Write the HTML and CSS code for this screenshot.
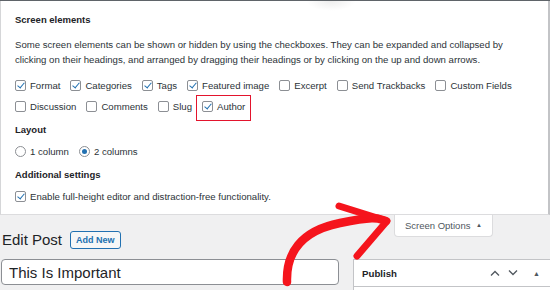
FILE: index.html
```html
<!DOCTYPE html>
<html lang="en">
<head>
    <meta charset="UTF-8">
    <title>Edit Post</title>
    <link rel="stylesheet" href="styles.css">
</head>
<body>
    <div class="topbar"></div>

    <!-- Screen options panel -->
    <div class="screen-meta">
        <h5>Screen elements</h5>
        <p class="desc">Some screen elements can be shown or hidden by using the checkboxes. They can be expanded and collapsed by clicking on their headings, and arranged by dragging their headings or by clicking on the up and down arrows.</p>

        <div class="opts">
            <label><input type="checkbox" checked> Format</label>
            <label><input type="checkbox" checked> Categories</label>
            <label><input type="checkbox" checked> Tags</label>
            <label><input type="checkbox" checked> Featured image</label>
            <label><input type="checkbox"> Excerpt</label>
            <label><input type="checkbox"> Send Trackbacks</label>
            <label><input type="checkbox"> Custom Fields</label>
        </div>
        <div class="opts">
            <label><input type="checkbox"> Discussion</label>
            <label><input type="checkbox"> Comments</label>
            <label><input type="checkbox"> Slug</label>
            <label class="highlight"><input type="checkbox" checked> Author</label>
        </div>

        <h5 class="sub">Layout</h5>
        <div class="opts">
            <label><input type="radio" name="cols"> 1 column</label>
            <label><input type="radio" name="cols" checked> 2 columns</label>
        </div>

        <h5 class="sub">Additional settings</h5>
        <div class="opts">
            <label><input type="checkbox" checked> Enable full-height editor and distraction-free functionality.</label>
        </div>
    </div>

    <div class="head">
        <div class="title-row">
            <h1>Edit Post</h1>
            <a class="add-new" href="#">Add New</a>
        </div>
        <button class="screen-tab">Screen Options <span class="tri">▲</span></button>
    </div>

    <div class="columns">
        <input class="post-title" type="text" value="This Is Important">
        <div class="postbox">
            <div class="postbox-header">
                <h2>Publish</h2>
                <div class="handles">
                    <svg width="10" height="6" viewBox="0 0 10 6"><path d="M1 5.5 L5 1.5 L9 5.5" fill="none" stroke="#50575e" stroke-width="1.3"/></svg>
                    <svg class="down" width="10" height="6" viewBox="0 0 10 6"><path d="M1 0.5 L5 4.5 L9 0.5" fill="none" stroke="#50575e" stroke-width="1.3"/></svg>
                    <span class="tri">▲</span>
                </div>
            </div>
        </div>
    </div>

    <!-- Hand drawn arrow pointing at the tab -->
    <svg class="arrow" width="550" height="290" viewBox="0 0 550 290">
        <path d="M287 282 C286 254, 300 231, 340 223 S378 219, 386 221" fill="none" stroke="#f5141c" stroke-width="8.5" stroke-linecap="round"/>
        <path d="M339 206 L387 221 L357 256" fill="none" stroke="#f5141c" stroke-width="7" stroke-linecap="round" stroke-linejoin="round"/>
    </svg>
</body>
</html>
```

FILE: styles.css
```css
/* Base */
body {
    margin: 0;
    background: #f0f0f1;
    font-family: "Liberation Sans", Arial, sans-serif;
    font-size: 9.6px;
    color: #2c3338;
    width: 550px;
    height: 290px;
    overflow: hidden;
    position: relative;
}

.topbar {
    height: 1px;
    background: #5f6469;
}

/* Screen options panel */
.screen-meta {
    position: relative;
    background: #fff;
    border-left: 1px solid #d5d6d8;
    border-right: 2px solid #c3c4c7;
    border-bottom: 1px solid #dcdcde;
    padding: 11px 14px 6px;
    height: 196px;
}

.screen-meta::before {
    content: "";
    position: absolute;
    left: 305px;
    top: 0;
    width: 50px;
    height: 10px;
    background: radial-gradient(ellipse at center top, rgba(0,0,0,.07), rgba(0,0,0,0) 70%);
}

h5 {
    margin: 0;
    font-size: 9.5px;
    line-height: 15px;
    font-weight: bold;
    color: #1d2327;
}

h5.sub {
    margin-top: 5px;
}

.desc {
    margin: 10px 0 8px;
    line-height: 15px;
    color: #2c3338;
    width: 500px;
}

.opts {
    display: flex;
    gap: 10px;
    height: 21px;
    align-items: center;
}

.opts + h5 {
    margin-top: 5px;
}

h5 + .opts {
    margin-top: 4px;
}

.opts label {
    display: flex;
    align-items: center;
    gap: 4px;
    position: relative;
    height: 21px;
}

/* Red highlight around Author */
.highlight::after {
    content: "";
    position: absolute;
    left: -6px;
    right: -6px;
    top: -1px;
    bottom: -4px;
    border: 1.5px solid #e3142d;
}

input[type="checkbox"],
input[type="radio"] {
    appearance: none;
    -webkit-appearance: none;
    margin: 0;
    width: 11px;
    height: 11px;
    border: 1px solid #8c8f94;
    border-radius: 2px;
    background: #fff;
    position: relative;
    box-sizing: border-box;
}

input[type="radio"] {
    border-radius: 50%;
}

input[type="checkbox"]:checked::before {
    content: "";
    position: absolute;
    left: 3px;
    top: 0;
    width: 3px;
    height: 6px;
    border-right: 1.6px solid #2271b1;
    border-bottom: 1.6px solid #2271b1;
    transform: rotate(40deg);
}

input[type="radio"]:checked::before {
    content: "";
    position: absolute;
    left: 2px;
    top: 2px;
    width: 5px;
    height: 5px;
    border-radius: 50%;
    background: #2271b1;
}

/* Heading row with the tab */
.head {
    display: flex;
    justify-content: space-between;
    align-items: flex-start;
    padding: 0 57px 0 2px;
}

.title-row {
    display: flex;
    align-items: center;
    gap: 8px;
    margin-top: 15px;
}

h1 {
    margin: 0;
    font-size: 15px;
    font-weight: normal;
    line-height: 19px;
    color: #1d2327;
}

.add-new {
    display: inline-block;
    border: 1px solid #2271b1;
    border-radius: 3px;
    background: #f6f7f7;
    color: #2271b1;
    font-weight: bold;
    font-size: 9px;
    text-decoration: none;
    padding: 0 5px;
    line-height: 16px;
}

.screen-tab {
    width: 99px;
    height: 22px;
    background: #fff;
    border: 1px solid #dcdcde;
    border-top: none;
    border-radius: 0 0 4px 4px;
    font-family: inherit;
    font-size: 9.5px;
    color: #50575e;
    padding: 0;
}

.tri {
    font-size: 6px;
    vertical-align: 2px;
    margin-left: 3px;
}

/* Main columns */
.columns {
    display: flex;
    margin-top: 10px;
    padding-left: 1px;
    gap: 14px;
}

.post-title {
    flex-shrink: 0;
    width: 338px;
    height: 26px;
    box-sizing: border-box;
    border: 1px solid #8c8f94;
    border-radius: 4px;
    padding: 0 7px;
    font-family: inherit;
    font-size: 15px;
    color: #1d2327;
    background: #fff;
}

.postbox {
    flex-shrink: 0;
    width: 197px;
    height: 31px;
    background: #fff;
    border: 1px solid #c3c4c7;
    border-right: none;
    border-bottom: none;
}

.postbox-header {
    display: flex;
    align-items: center;
    justify-content: space-between;
    height: 26px;
    border-bottom: 1px solid #c3c4c7;
    padding: 0 11px 0 8px;
}

.postbox-header h2 {
    margin: 0;
    font-size: 9.7px;
    font-weight: bold;
    color: #1d2327;
}

.handles {
    display: flex;
    align-items: center;
    gap: 8px;
    color: #50575e;
}

.handles .tri {
    margin-left: 7px;
    font-size: 7px;
    vertical-align: 0;
}

/* Arrow drawing on top */
.arrow {
    position: absolute;
    left: 0;
    top: 0;
    pointer-events: none;
}
```
